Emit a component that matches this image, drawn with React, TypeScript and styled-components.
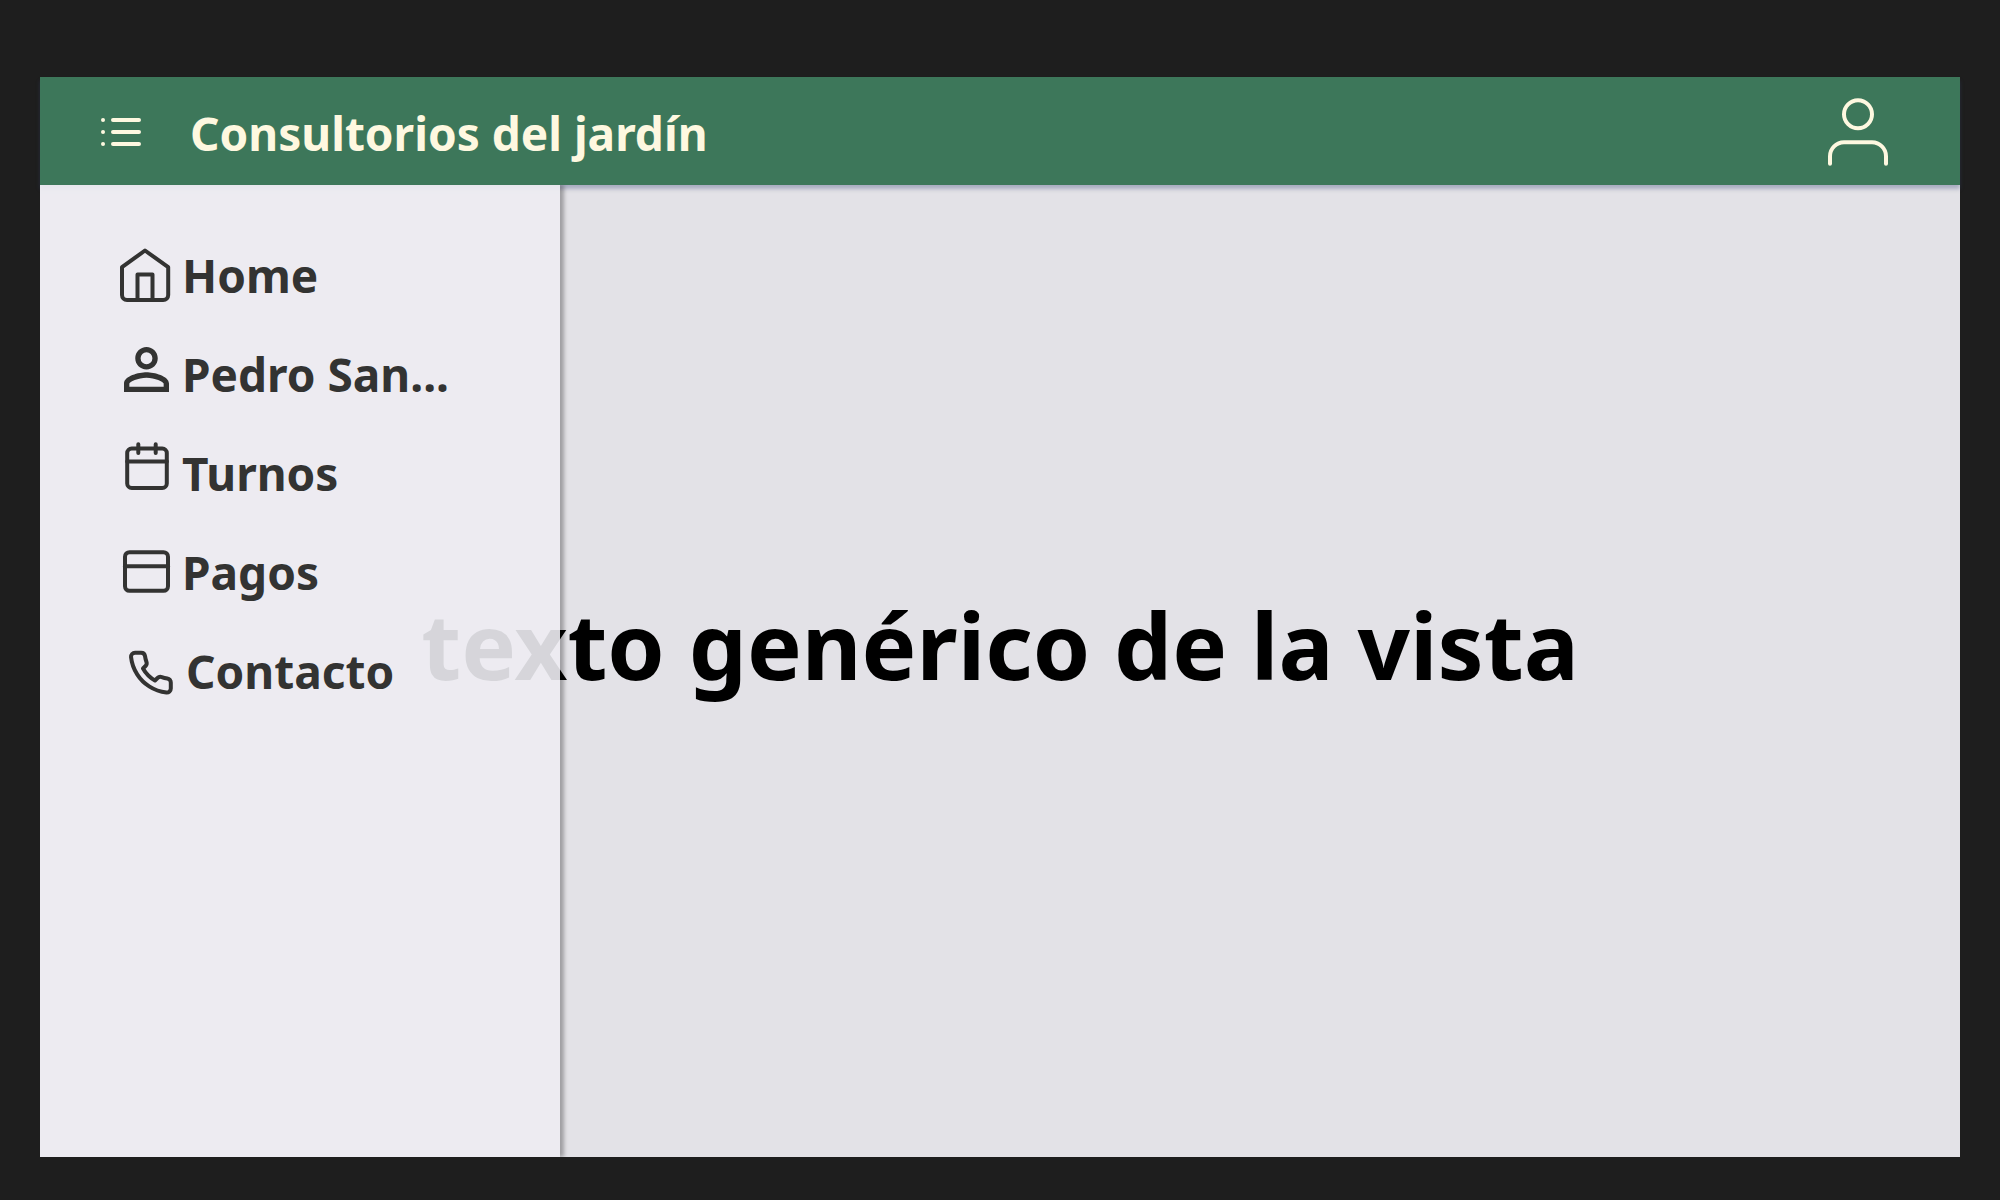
import React from "react";
import styled, { createGlobalStyle } from "styled-components";

const GlobalStyle = createGlobalStyle`
  *, *::before, *::after { box-sizing: border-box; }
  body {
    margin: 0;
    background: #1e1e1e;
    font-family: "Noto Sans", "Open Sans", sans-serif;
    font-weight: 700;
  }
`;

const Page = styled.div`
  display: flex;
  min-height: 100vh;
  padding: 77px 40px 43px;
`;

const Frame = styled.div`
  display: flex;
  flex: 1;
  flex-direction: column;
  min-width: 0;
  background: #e3e2e7;
`;

const Header = styled.header`
  display: flex;
  align-items: center;
  gap: 44px;
  height: 108px;
  padding: 0 72px 0 58px;
  background: #3d775a;
  color: #fef8e0;
  box-shadow: 0 4px 4px rgba(60, 75, 120, 0.35);
`;

const IconButton = styled.button`
  display: flex;
  padding: 0;
  border: 0;
  background: none;
  color: inherit;
  cursor: pointer;
`;

const Title = styled.h1`
  flex: 1;
  margin: 0;
  padding-top: 4px;
  font-size: 46px;
  line-height: 60px;
  white-space: nowrap;
`;

const Body = styled.div`
  display: grid;
  flex: 1;
  grid-template-columns: 520px 1fr;
  grid-template-rows: 1fr;
`;

const View = styled.main`
  display: flex;
  grid-area: 1 / 1 / 2 / 3;
  align-items: center;
  justify-content: center;
  padding-bottom: 52px;
`;

const ViewText = styled.p`
  margin: 0;
  color: #000;
  font-size: 92px;
  line-height: 120px;
  white-space: nowrap;
`;

const Drawer = styled.nav`
  z-index: 1;
  grid-area: 1 / 1 / 2 / 2;
  padding: 60px 78px;
  background: rgba(237, 236, 242, 0.9);
  box-shadow: 4px 0 4px rgba(0, 0, 0, 0.3);
  clip-path: inset(0 -12px 0 0);
`;

const Menu = styled.ul`
  display: flex;
  flex-direction: column;
  gap: 39px;
  margin: 0;
  padding: 0;
  list-style: none;
`;

const MenuLink = styled.a`
  display: flex;
  align-items: center;
  gap: 4px;
  color: #333332;
  font-size: 46px;
  line-height: 60px;
  text-decoration: none;
  white-space: nowrap;
`;

const Glyph = styled.svg<{ $width: number; $height: number }>`
  flex: none;
  width: ${(p) => p.$width}px;
  height: ${(p) => p.$height}px;
  overflow: visible;
  fill: none;
  stroke: currentColor;
  stroke-width: 4;
  stroke-linecap: round;
  stroke-linejoin: round;
`;

type IconProps = { width: number; height: number; children: React.ReactNode };

const Icon = ({ width, height, children }: IconProps) => (
  <Glyph $width={width} $height={height} viewBox={`0 0 ${width} ${height}`} aria-hidden="true">
    {children}
  </Glyph>
);

const ListIcon = () => (
  <Icon width={48} height={48}>
    <path d="M15 13h26M15 25h26M15 37h26" />
    <path d="M5 13h.02M5 25h.02M5 37h.02" />
  </Icon>
);

const AccountIcon = () => (
  <Icon width={64} height={72}>
    <circle cx="34" cy="19.3" r="14" />
    <path d="M6 68.7V61.3a14 14 0 0 1 14-14h28a14 14 0 0 1 14 14v7.4" />
  </Icon>
);

const HomeIcon = () => (
  <Icon width={60} height={60}>
    <path d="M4 22.2 27 5.5 50.2 22.2V50a5 5 0 0 1-5 5H9a5 5 0 0 1-5-5z" />
    <path d="M19.5 55V29.5h15V55" />
  </Icon>
);

const PersonIcon = () => (
  <Icon width={60} height={60}>
    <path
      transform="translate(-5.25 -8.25) scale(2.8125)"
      fill="currentColor"
      stroke="none"
      d="M12 5.9a2.1 2.1 0 1 1 0 4.2 2.1 2.1 0 0 1 0-4.2m0 9c2.97 0 6.1 1.46 6.1 2.1v1.1H5.9V17c0-.64 3.13-2.1 6.1-2.1M12 4C9.79 4 8 5.79 8 8s1.79 4 4 4 4-1.79 4-4-1.79-4-4-4zm0 9c-2.67 0-8 1.34-8 4v3h16v-3c0-2.66-5.33-4-8-4z"
    />
  </Icon>
);

const CalendarIcon = () => (
  <Icon width={60} height={60}>
    <rect x="9.2" y="5.5" width="39.6" height="39.5" rx="4.5" />
    <path d="M9.2 18.5h39.6M20.3 1.3v8.7M37.7 1.3v8.7" />
  </Icon>
);

const CardIcon = () => (
  <Icon width={60} height={60}>
    <rect x="7" y="10.2" width="43" height="38.6" rx="4.5" />
    <path d="M7 24.3h43" />
  </Icon>
);

const PhoneIcon = () => (
  <Icon width={64} height={60}>
    <path
      transform="translate(8.8 7.7) scale(2)"
      vectorEffect="non-scaling-stroke"
      d="M22 16.92v3a2 2 0 0 1-2.18 2 19.79 19.79 0 0 1-8.63-3.07 19.5 19.5 0 0 1-6-6 19.79 19.79 0 0 1-3.07-8.67A2 2 0 0 1 4.11 2h3a2 2 0 0 1 2 1.72 12.84 12.84 0 0 0 .7 2.81 2 2 0 0 1-.45 2.11L8.09 9.91a16 16 0 0 0 6 6l1.27-1.27a2 2 0 0 1 2.11-.45 12.84 12.84 0 0 0 2.81.7A2 2 0 0 1 22 16.92z"
    />
  </Icon>
);

const items = [
  { label: "Home", Glyph: HomeIcon },
  { label: "Pedro San...", Glyph: PersonIcon },
  { label: "Turnos", Glyph: CalendarIcon },
  { label: "Pagos", Glyph: CardIcon },
  { label: "Contacto", Glyph: PhoneIcon },
];

export default function App() {
  return (
    <>
      <GlobalStyle />
      <Page>
        <Frame>
          <Header>
            <IconButton type="button" aria-label="Menú">
              <ListIcon />
            </IconButton>
            <Title>Consultorios del jardín</Title>
            <IconButton type="button" aria-label="Cuenta">
              <AccountIcon />
            </IconButton>
          </Header>
          <Body>
            <View>
              <ViewText>texto genérico de la vista</ViewText>
            </View>
            <Drawer aria-label="Principal">
              <Menu>
                {items.map(({ label, Glyph: ItemIcon }) => (
                  <li key={label}>
                    <MenuLink href="#">
                      <ItemIcon />
                      {label}
                    </MenuLink>
                  </li>
                ))}
              </Menu>
            </Drawer>
          </Body>
        </Frame>
      </Page>
    </>
  );
}
